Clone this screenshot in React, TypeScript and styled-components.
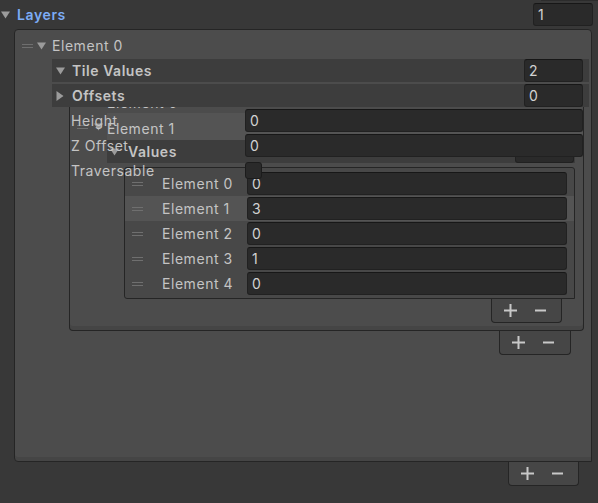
import React from "react";
import styled, { createGlobalStyle } from "styled-components";

const Global = createGlobalStyle`
  html, body { margin: 0; padding: 0; background: #383838; }
  body {
    font-family: Inter, "Noto Sans", sans-serif;
    font-size: 14px;
    color: #c4c4c4;
    -webkit-font-smoothing: antialiased;
  }
  * { box-sizing: border-box; }
`;

const Page = styled.div`
  width: 598px;
  height: 503px;
  overflow: hidden;
  background: #383838;
  display: flex;
  flex-direction: column;
`;

const TopBar = styled.div`
  position: relative;
  height: 29px;
  display: flex;
  align-items: center;
  padding-left: 1px;
  &::before {
    content: "";
    position: absolute;
    top: 0;
    left: 541px;
    right: 0;
    height: 1px;
    background: #2c2c2c;
  }
`;

const LayersLabel = styled.span`
  margin-left: 7px;
  font-weight: 600;
  color: #7cacf6;
  flex: 1;
  letter-spacing: 0.6px;
`;

const Field = styled.div<{ $w?: number; $h?: number }>`
  width: ${(p) => (p.$w ? `${p.$w}px` : "auto")};
  height: ${(p) => p.$h ?? 23}px;
  flex-shrink: 0;
  background: #2a2a2a;
  border: 1px solid #212121;
  border-top-color: #171717;
  border-radius: 3px;
  color: #d2d2d2;
  display: flex;
  align-items: center;
  padding-left: 4px;
  font-size: 14px;
  letter-spacing: 0.4px;
`;

const OuterList = styled.div`
  margin-left: 14px;
  width: 578px;
  height: 433px;
  flex-shrink: 0;
  border: 1px solid #252525;
  border-radius: 4px 4px 0 4px;
  background: #4c4c4c;
  box-shadow: inset 0 -4px 0 #454545;
  display: flex;
  flex-direction: column;
`;

const ElementRow = styled.div`
  height: 29px;
  padding-top: 2px;
  display: flex;
  align-items: center;
`;

const Handle = styled.span<{ $ml: number }>`
  margin-left: ${(p) => p.$ml}px;
  width: 11px;
  height: 4px;
  flex-shrink: 0;
  border-top: 1px solid #6f6f6f;
  border-bottom: 1px solid #6f6f6f;
`;

const Label = styled.span<{ $ml?: number; $w?: number; $bold?: boolean }>`
  margin-left: ${(p) => p.$ml ?? 0}px;
  ${(p) => (p.$w ? `width: ${p.$w}px; flex-shrink: 0;` : "")}
  font-weight: ${(p) => (p.$bold ? 600 : 400)};
  white-space: nowrap;
  letter-spacing: 0.55px;
`;

const FoldoutBlock = styled.div`
  margin-left: 37px;
  width: 537px;
  display: flex;
  flex-direction: column;
`;

const FoldHeader = styled.div<{ $mt?: number }>`
  position: relative;
  z-index: 2;
  margin-top: ${(p) => p.$mt ?? 0}px;
  height: 23px;
  background: #3d3d3d;
  display: flex;
  align-items: center;
  padding-left: 4px;
  padding-right: 6px;
`;

const Spacer = styled.div`
  flex: 1;
`;

const TilePanel = styled.div`
  margin-left: 17px;
  width: 515px;
  height: 224px;
  border: 1px solid #252525;
  border-top: none;
  border-radius: 0 0 4px 4px;
  background: #4c4c4c;
  box-shadow: inset 0 -4px 0 #454545;
  display: grid;
  grid-template-columns: 1fr;
  grid-template-rows: 1fr;
  & > * {
    grid-area: 1 / 1;
  }
`;

const Layer = styled.div<{ $pt?: number; $pl?: number }>`
  display: flex;
  flex-direction: column;
  padding-top: ${(p) => p.$pt ?? 0}px;
  padding-left: ${(p) => p.$pl ?? 0}px;
  min-width: 0;
`;

const HiddenLabel = styled.div`
  margin-top: -12px;
  height: 16px;
  line-height: 16px;
  padding-left: 37px;
  letter-spacing: 0.55px;
`;

const GlitchRow = styled.div`
  margin-top: 2px;
  height: 27px;
  display: flex;
  align-items: center;
`;

const RowBand = styled.div`
  margin-left: 4px;
  flex: 1;
  align-self: stretch;
  background: #545454;
  display: flex;
  align-items: center;
  padding-top: 3px;
`;

const SubHeader = styled.div`
  margin-left: 37px;
  margin-right: 8px;
  height: 23px;
  background: #3d3d3d;
  display: flex;
  align-items: center;
  padding-left: 3px;
  padding-right: 1px;
`;

const ValuesPanel = styled.div`
  margin-top: 4px;
  margin-left: 54px;
  margin-right: 8px;
  height: 132px;
  border: 1px solid #252525;
  border-radius: 3px 3px 0 3px;
  background: #484848;
  padding-top: 3px;
  display: flex;
  flex-direction: column;
`;

const ValueRow = styled.div<{ $hl?: boolean }>`
  height: 25px;
  display: flex;
  align-items: center;
  background: ${(p) => (p.$hl ? "#545454" : "transparent")};
`;

const PropLabel = styled.div`
  height: 25px;
  line-height: 25px;
  white-space: nowrap;
  letter-spacing: 0.55px;
`;

const Toggle = styled.div`
  margin-top: 5px;
  width: 17px;
  height: 17px;
  background: #2a2a2a;
  border: 1px solid #1c1c1c;
  border-radius: 3px;
`;

const ListFooter = styled.div<{ $mr: number; $w: number }>`
  align-self: flex-end;
  margin-right: ${(p) => p.$mr}px;
  width: ${(p) => p.$w}px;
  height: 24px;
  flex-shrink: 0;
  background: #464646;
  border: 1px solid #252525;
  border-top: none;
  border-radius: 0 0 4px 4px;
  display: flex;
  align-items: center;
  padding-left: 12px;
  gap: 18px;
`;

const Tri = ({ dir, ml = 0 }: { dir: "down" | "right"; ml?: number }) =>
  dir === "down" ? (
    <svg width="9" height="8" viewBox="0 0 9 8" style={{ marginLeft: ml, flexShrink: 0 }}>
      <polygon points="0,0.5 9,0.5 4.5,7.5" fill="#9b9b9b" />
    </svg>
  ) : (
    <svg width="8" height="10" viewBox="0 0 8 10" style={{ marginLeft: ml, flexShrink: 0 }}>
      <polygon points="0.5,0 7.5,5 0.5,10" fill="#9b9b9b" />
    </svg>
  );

const PlusMinus = () => (
  <>
    <svg width="13" height="13" viewBox="0 0 13 13">
      <rect x="5.5" y="0" width="2" height="13" fill="#c8c8c8" />
      <rect x="0" y="5.5" width="13" height="2" fill="#c8c8c8" />
    </svg>
    <svg width="11" height="13" viewBox="0 0 11 13">
      <rect x="0" y="5.5" width="11" height="2" fill="#c8c8c8" />
    </svg>
  </>
);

const values = ["0", "3", "0", "1", "0"];

export default function App() {
  return (
    <Page>
      <Global />
      <TopBar>
        <Tri dir="down" />
        <LayersLabel>Layers</LayersLabel>
        <Field $w={60} style={{ marginRight: 5 }}>1</Field>
      </TopBar>
      <OuterList>
        <ElementRow>
          <Handle $ml={7} />
          <Tri dir="down" ml={4} />
          <Label $ml={6}>Element 0</Label>
        </ElementRow>
        <FoldoutBlock>
          <FoldHeader>
            <Tri dir="down" />
            <Label $ml={7} $bold>Tile Values</Label>
            <Spacer />
            <Field $w={59}>2</Field>
          </FoldHeader>
          <FoldHeader $mt={2}>
            <Tri dir="right" />
            <Label $ml={8} $bold>Offsets</Label>
            <Spacer />
            <Field $w={59}>0</Field>
          </FoldHeader>
          <TilePanel>
            <Layer>
              <HiddenLabel>Element 0</HiddenLabel>
              <GlitchRow>
                <Handle $ml={7} />
                <Tri dir="down" ml={6} />
                <RowBand>
                  <Label>Element 1</Label>
                </RowBand>
              </GlitchRow>
              <SubHeader>
                <Tri dir="down" />
                <Label $ml={9} $bold>Values</Label>
                <Spacer />
                <Field $w={59}>5</Field>
              </SubHeader>
              <ValuesPanel>
                {values.map((v, i) => (
                  <ValueRow key={i} $hl={i === 1}>
                    <Handle $ml={7} />
                    <Label $ml={19} $w={85}>{`Element ${i}`}</Label>
                    <Field style={{ flex: 1, marginRight: 7 }}>{v}</Field>
                  </ValueRow>
                ))}
              </ValuesPanel>
              <ListFooter $mr={21} $w={71}>
                <PlusMinus />
              </ListFooter>
            </Layer>
            <Layer $pt={1} $pl={1}>
              <PropLabel>Height</PropLabel>
              <PropLabel>Z Offset</PropLabel>
              <PropLabel>Traversable</PropLabel>
            </Layer>
            <Layer $pt={2} $pl={175}>
              <Field>0</Field>
              <Field style={{ marginTop: 2 }}>0</Field>
              <Toggle />
            </Layer>
          </TilePanel>
          <ListFooter $mr={18} $w={72}>
            <PlusMinus />
          </ListFooter>
        </FoldoutBlock>
      </OuterList>
      <ListFooter $mr={19} $w={71}>
        <PlusMinus />
      </ListFooter>
    </Page>
  );
}
